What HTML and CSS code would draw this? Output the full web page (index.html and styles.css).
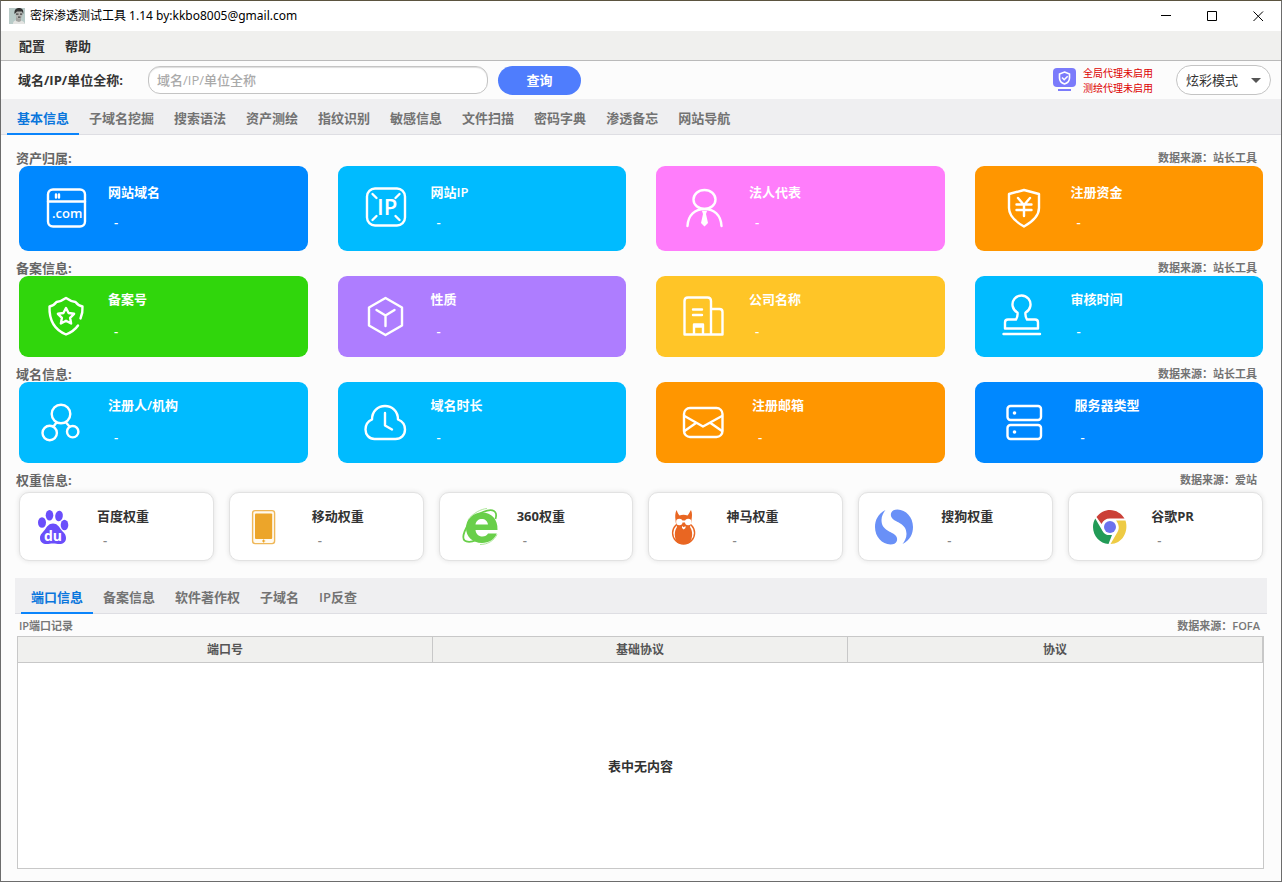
FILE: index.html
```html
<!DOCTYPE html>
<html lang="zh-CN">
<head>
<meta charset="utf-8">
<title>密探渗透测试工具</title>
<link rel="stylesheet" href="styles.css">
</head>
<body>
<div class="window">
  <header class="titlebar">
    <svg class="avatar" viewBox="0 0 16 16" aria-hidden="true">
      <rect width="16" height="16" fill="#b9cbc8"/>
      <path d="M4 16c0-3 2-4 5-4s6 1 7 4z" fill="#e4e4e2"/>
      <path d="M7 9h5v4l-2 1-3-1z" fill="#a3a3a0"/>
      <ellipse cx="10" cy="6" rx="3.6" ry="4.8" fill="#b5b5b2"/>
      <path d="M5.500 6C5 2 7 0 10 0s5 2 4.200 6L13 3.500H8z" fill="#333"/>
      <path d="M7 6.200h2.500M11 6.200h2.200M9 9.200h2.500" stroke="#444" stroke-width="1.200"/>
    </svg>
    <h1 class="titlebar-text">密探渗透测试工具 1.14 by:kkbo8005@gmail.com</h1>
    <div class="window-controls">
      <button type="button" aria-label="最小化"><svg viewBox="0 0 11 11"><path d="M0 4.500h10"/></svg></button>
      <button type="button" aria-label="最大化"><svg viewBox="0 0 11 11"><path d="M.5.5h9v9H.5z"/></svg></button>
      <button type="button" aria-label="关闭"><svg viewBox="0 0 11 11"><path d="M.5.5l9.500 9.500M10 .5L.5 10"/></svg></button>
    </div>
  </header>

  <nav class="menubar">
    <button type="button">配置</button>
    <button type="button">帮助</button>
  </nav>

  <form class="toolbar">
    <label class="search-label" for="target">域名/IP/单位全称:</label>
    <input class="search-input" id="target" type="text" placeholder="域名/IP/单位全称">
    <button class="search-button" type="button">查询</button>
    <div class="proxy">
      <svg class="proxy-icon" viewBox="0 0 24 24" aria-hidden="true">
        <rect width="23" height="19" rx="4" fill="#7b7bfb"/>
        <path d="M5 22h13" stroke="#7b7bfb" stroke-width="2"/>
        <path d="M11.500 4l5 2v4c0 3-2 5-5 6-3-1-5-3-5-6V6z" fill="none" stroke="#fff" stroke-width="1.600"/>
        <path d="M9 9.500l2.200 2.200 3.500-3.500" fill="none" stroke="#fff" stroke-width="1.600"/>
      </svg>
      <p class="proxy-status">全局代理未启用<br>测绘代理未启用</p>
    </div>
    <div class="mode">
      <select aria-label="显示模式"><option>炫彩模式</option></select>
      <svg viewBox="0 0 10 5" aria-hidden="true"><path d="M0 0h10L5 5z"/></svg>
    </div>
  </form>

  <nav class="tabs main-tabs">
    <button class="tab active" type="button">基本信息</button>
    <button class="tab" type="button">子域名挖掘</button>
    <button class="tab" type="button">搜索语法</button>
    <button class="tab" type="button">资产测绘</button>
    <button class="tab" type="button">指纹识别</button>
    <button class="tab" type="button">敏感信息</button>
    <button class="tab" type="button">文件扫描</button>
    <button class="tab" type="button">密码字典</button>
    <button class="tab" type="button">渗透备忘</button>
    <button class="tab" type="button">网站导航</button>
  </nav>

  <main class="content">
    <section class="group ownership">
      <div class="group-head"><h2>资产归属:</h2><span>数据来源：站长工具</span></div>
      <div class="cards">
        <article class="card blue lead-s">
          <div class="icon"><svg viewBox="0 0 49 49"><rect x="7" y="5.500" width="37" height="37" rx="5"/><path d="M7 17.500h37M15 10.500v3M18 10.500v3"/><text x="11" y="34" font-size="13">.com</text></svg></div>
          <div class="card-text"><h3>网站域名</h3><p>-</p></div>
        </article>
        <article class="card sky lead-m">
          <div class="icon"><svg viewBox="0 0 49 49"><rect x="7" y="4.500" width="38" height="37" rx="8"/><path d="M12.500 10l4 4M39.500 10l-4 4M12.500 36l4-4M39.500 36l-4-4"/><text x="17" y="31" font-size="22">IP</text></svg></div>
          <div class="card-text"><h3>网站IP</h3><p>-</p></div>
        </article>
        <article class="card pink lead-m">
          <div class="icon"><svg viewBox="0 0 49 49"><ellipse cx="26.500" cy="15.500" rx="11" ry="9.500"/><path d="M9.500 42C10 31 17 25 26.500 25S43 31 43.500 42"/><path class="solid" d="M24 27h5l-1 3 2 9-3.500 3.500L23 39l2-9z"/></svg></div>
          <div class="card-text"><h3>法人代表</h3><p>-</p></div>
        </article>
        <article class="card orange lead-l">
          <div class="icon"><svg viewBox="0 0 49 49"><path d="M27 6l15 4v14c0 8-7 14-15 18.500C19 38 12 32 12 24V10z"/><path d="M21 14l6 7 6-7M27 21v11M19.500 20.500h15M19.500 26h15"/></svg></div>
          <div class="card-text"><h3>注册资金</h3><p>-</p></div>
        </article>
      </div>
    </section>

    <section class="group">
      <div class="group-head"><h2>备案信息:</h2><span>数据来源：站长工具</span></div>
      <div class="cards">
        <article class="card green lead-s">
          <div class="icon"><svg viewBox="0 0 49 49"><path d="M39.500 26.500Q42 20 41.500 14.500 37 13.500 34.500 10 30 9.500 25 6 20 9.500 15.500 10 13 13.500 8.500 14.500C8 30 14 38 25 42.500 31 40 34 38 37 33.500"/><path d="M25 16l2.600 5 5.500.8-4 4 1 5.700-5.100-2.700-5.100 2.700 1-5.700-4-4 5.500-.8z"/></svg></div>
          <div class="card-text"><h3>备案号</h3><p>-</p></div>
        </article>
        <article class="card purple lead-m">
          <div class="icon"><svg viewBox="0 0 49 49"><path d="M25.500 6L42 15.500v18L25.500 43 9 33.500v-18z"/><path d="M16.500 18l9 5.500 9-5.500M25.500 23.500V34"/></svg></div>
          <div class="card-text"><h3>性质</h3><p>-</p></div>
        </article>
        <article class="card yellow lead-m">
          <div class="icon"><svg viewBox="0 0 49 49"><path d="M6.500 42.500V9q0-3.500 3.500-3.500h19.500q3.500 0 3.500 3.500v33.500M33 17h8.500q3 0 3 3v22.500h-38M16 42V32.500h9V42M18 34.500h5M15 17.500h9M15 23h9"/></svg></div>
          <div class="card-text"><h3>公司名称</h3><p>-</p></div>
        </article>
        <article class="card sky lead-l">
          <div class="icon"><svg viewBox="0 0 49 49"><path d="M11 27.500h8q2-3 1.500-7a9 9 0 1 1 8 0q-.5 4 1.500 7h8q3 0 3 3V36.500H8v-6q0-3 3-3zM6.500 42h36.500"/></svg></div>
          <div class="card-text"><h3>审核时间</h3><p>-</p></div>
        </article>
      </div>
    </section>

    <section class="group">
      <div class="group-head"><h2>域名信息:</h2><span>数据来源：站长工具</span></div>
      <div class="cards">
        <article class="card sky lead-s">
          <div class="icon"><svg viewBox="0 0 49 49"><circle cx="20" cy="16" r="9.300"/><circle cx="8.700" cy="35" r="7.200"/><circle cx="31.700" cy="33.700" r="5.700"/><path d="M15.500 24.500l-3 4M25 24.500l3.500 4"/></svg></div>
          <div class="card-text"><h3>注册人/机构</h3><p>-</p></div>
        </article>
        <article class="card sky lead-m">
          <div class="icon"><svg viewBox="0 0 49 49"><path d="M14.500 41C9 41 5.500 36.500 5.500 31.500 5.500 26 8.500 23 12 21.500 12 13 18 8 25 8s13 5 13 13.500c4 1.500 7 5 7 10C45 37 41 41 35.500 41zM25 15v12.500l7 4"/></svg></div>
          <div class="card-text"><h3>域名时长</h3><p>-</p></div>
        </article>
        <article class="card orange lead-l">
          <div class="icon"><svg viewBox="0 0 49 49"><rect x="6" y="10" width="38.500" height="29" rx="6"/><path d="M6.500 18l18.500 10.500L44 18M6.500 33L18 25M44 33l-11.500-8"/></svg></div>
          <div class="card-text"><h3>注册邮箱</h3><p>-</p></div>
        </article>
        <article class="card blue lead-xl">
          <div class="icon"><svg viewBox="0 0 49 49"><rect x="10.500" y="8" width="33.500" height="14" rx="3"/><rect x="10.500" y="27" width="33.500" height="14" rx="3"/><circle class="solid" cx="17.500" cy="15" r="1.800"/><circle class="solid" cx="17.500" cy="34" r="1.800"/></svg></div>
          <div class="card-text"><h3>服务器类型</h3><p>-</p></div>
        </article>
      </div>
    </section>

    <section class="group">
      <div class="group-head"><h2>权重信息:</h2><span>数据来源：爱站</span></div>
      <div class="weights">
        <article class="weight">
          <div class="logo"><svg viewBox="0 0 49 49"><g fill="#6a4efb"><ellipse cx="11" cy="20.500" rx="4" ry="5.300"/><ellipse cx="18.500" cy="13.300" rx="3.800" ry="5.300"/><ellipse cx="28" cy="14" rx="3.800" ry="5.300" transform="rotate(10 28 14)"/><ellipse cx="33.500" cy="23" rx="3.800" ry="5.200"/><path d="M22 21.500c4 0 6 3 8 6s5 4 5 8.500c0 4-3 6-6.500 6-2.500 0-4-.5-6.500-.5s-4 .5-6.500.5C12 42 9 40 9 36c0-4 3-5.500 5-8.500s4-6 8-6z"/></g><text class="du" x="13" y="39" font-size="14">du</text></svg></div>
          <div class="weight-text"><h3>百度权重</h3><p>-</p></div>
        </article>
        <article class="weight wide">
          <div class="logo"><svg viewBox="0 0 49 49"><rect x="11.600" y="8.600" width="22" height="33" rx="2.500" fill="#fffaf0" stroke="#efb758" stroke-width="1.400"/><rect x="14" y="11.500" width="17.200" height="25.500" rx="1" fill="#eca52a"/><path d="M22.600 37.500v3M21 39h3.200" stroke="#eca52a" stroke-width="1.200"/></svg></div>
          <div class="weight-text"><h3>移动权重</h3><p>-</p></div>
        </article>
        <article class="weight">
          <div class="logo"><svg viewBox="0 0 49 49"><path fill="#69cf4a" fill-rule="evenodd" d="M46.500 28H24.500c.5 4 3 6.500 7 6.500 2.500 0 4.500-1 5.500-3h8.800C43.500 37.500 38 41 31 41 21.500 41 15 34.500 15 26S21.500 10.500 31 10.500 47 17 46.500 28zM24.500 22.500H37c-.5-3.500-3-5.500-6.200-5.500s-5.800 2-6.300 5.500z"/><path fill="none" stroke="#69cf4a" stroke-width="1.800" d="M44.500 17C47 9 42 6 32 10c-9 3.500-17 13-19.500 23-1.500 7 5 8.500 13 5"/><path fill="none" stroke="#aee79b" d="M17 18c5-7 13-11 19-11.500M29 42.500c8 0 14-4 17-10"/></svg></div>
          <div class="weight-text"><h3>360权重</h3><p>-</p></div>
        </article>
        <article class="weight">
          <div class="logo"><svg viewBox="0 0 49 49"><ellipse cx="23.600" cy="31" rx="11" ry="11" fill="#fff" stroke="#e96622" stroke-width="1.400"/><path fill="#e96622" d="M16.500 8c1 2 1.500 4 3 5.500q4-1.500 8 0c1.500-1.500 2-3.500 3.500-5.500 1.500 3 1 7 .5 10 0 3-1 5-1.500 7 3 4 3 11-.5 16q-6 2-12 0c-3.500-5-3.500-12-.5-16-.5-2-1.500-4-1.500-7-.5-3-.5-7 1-10z"/><g fill="#fff"><circle cx="19.300" cy="20" r="3.200"/><circle cx="28.200" cy="20" r="3.200"/><path d="M21 18.500h5v2h-5zM22 24l1.700 1.200L25.500 24v2l-1.800 1.500L22 26z"/></g></svg></div>
          <div class="weight-text"><h3>神马权重</h3><p>-</p></div>
        </article>
        <article class="weight wide">
          <div class="logo"><svg viewBox="0 0 49 49" fill="#6990f7"><path id="swirl" d="M15.500 8C8 12 5 18 5 25c0 10 7 17 15.500 17.500 6.500 0 8-5 5.500-8.500-4-5-14.500-5-14.500-16 0-4 2-7.500 4-10z"/><use href="#swirl" transform="rotate(180 24 25)"/></svg></div>
          <div class="weight-text"><h3>搜狗权重</h3><p>-</p></div>
        </article>
        <article class="weight wide">
          <div class="logo"><svg viewBox="0 0 49 49"><path fill="#cb4038" d="M16.500 15C20 10.500 25 8 30 8c6 0 11.500 3.500 14.500 8.500H30c-4 0-7 2-8.500 5.500z"/><path fill="#229b57" d="M15.300 16.500l7.200 12.500c2 3.500 5 4.500 9.500 4L28.500 42C20 41.500 13 34 13 25c0-3 .8-6 2.300-8.500z"/><path fill="#eecb44" d="M45.500 18.500C49 30 42 42 30.500 42l7-12c2.500-4 1-8.500-1.500-11.500z"/><circle cx="30" cy="25" r="8" fill="#fff"/><circle cx="30" cy="25" r="6" fill="#6d72ee"/></svg></div>
          <div class="weight-text"><h3>谷歌PR</h3><p>-</p></div>
        </article>
      </div>
    </section>
  </main>

  <section class="details">
    <nav class="tabs sub-tabs">
      <button class="tab active" type="button">端口信息</button>
      <button class="tab" type="button">备案信息</button>
      <button class="tab" type="button">软件著作权</button>
      <button class="tab" type="button">子域名</button>
      <button class="tab" type="button">IP反查</button>
    </nav>
    <div class="record-head"><span>IP端口记录</span><span>数据来源：FOFA</span></div>
    <div class="table-wrap">
      <table>
        <thead><tr><th scope="col">端口号</th><th scope="col">基础协议</th><th scope="col">协议</th></tr></thead>
        <tbody><tr><td colspan="3">表中无内容</td></tr></tbody>
      </table>
    </div>
  </section>
</div>
</body>
</html>
```
FILE: styles.css
```css
* {
  box-sizing: border-box;
}

body {
  margin: 0;
  font-family: "Open Sans", "Noto Sans CJK SC", sans-serif;
  font-size: 13px;
  font-weight: 600;
  line-height: 16px;
  color: #333;
}

h1, h2, h3, p {
  margin: 0;
  font-size: inherit;
  font-weight: inherit;
}

button, input, select {
  padding: 0;
  border: 0;
  background: none;
  font: inherit;
  color: inherit;
}

.window {
  display: flex;
  flex-direction: column;
  height: 100vh;
  min-height: 760px;
  border: 1px solid #6c6c6c;
  border-top-color: #5b543f;
  background: #fcfcfc;
}

/* Title bar */
.titlebar {
  display: flex;
  align-items: center;
  height: 30px;
  padding-left: 8px;
  background: #fff;
}

.avatar {
  width: 16px;
  height: 16px;
}

.titlebar-text {
  flex: 1;
  margin-left: 5px;
  font-family: "Noto Sans", "Noto Sans CJK SC", sans-serif;
  font-size: 12px;
  font-weight: 400;
  color: #000;
}

.window-controls {
  display: flex;
}

.window-controls button {
  display: grid;
  place-items: center;
  width: 46px;
  height: 30px;
}

.window-controls svg {
  width: 11px;
  height: 11px;
  fill: none;
  stroke: #000;
}

/* Menu bar */
.menubar {
  display: flex;
  gap: 20px;
  height: 30px;
  padding-left: 18px;
  border-bottom: 1px solid #bababa;
  background: #f0f0ee;
}

/* Toolbar */
.toolbar {
  display: flex;
  align-items: center;
  height: 38px;
  padding: 0 10px 0 17px;
}

.search-label {
  width: 130px;
  font-weight: 700;
}

.search-input {
  width: 340px;
  height: 28px;
  padding: 0 8px;
  border: 1px solid #c4c4c4;
  border-radius: 12px;
  background: #fff;
  box-shadow: inset 0 1px 1px #ddd;
  font-weight: 500;
}

.search-input::placeholder {
  color: #aaa;
}

.search-button {
  width: 83px;
  height: 29px;
  margin-left: 10px;
  border-radius: 15px;
  background: #4f7dfd;
  color: #fff;
}

.proxy {
  display: flex;
  align-items: center;
  gap: 6px;
  margin-left: auto;
}

.proxy-icon {
  width: 24px;
  height: 24px;
}

.proxy-status {
  padding-top: 2px;
  font-size: 10px;
  font-weight: 400;
  line-height: 15px;
  color: #d00;
}

.mode {
  position: relative;
  width: 95px;
  margin-left: 23px;
}

.mode select {
  display: block;
  width: 100%;
  height: 30px;
  padding: 0 9px;
  border: 1px solid #c4c4c4;
  border-radius: 15px;
  background: #fff;
  font-weight: 400;
  appearance: none;
}

.mode svg {
  position: absolute;
  top: 13px;
  right: 10px;
  width: 10px;
  height: 5px;
  fill: #555;
  pointer-events: none;
}

/* Tabs */
.tabs {
  display: flex;
  height: 36px;
  padding-left: 6px;
  border-bottom: 1px solid #dedee3;
  background: #efeff1;
}

.tab {
  height: 36px;
  padding: 4px 10px 0;
  border-bottom: 2px solid transparent;
  color: #737373;
}

.tab.active {
  border-bottom-color: #0a84fb;
  color: #0a76dc;
}

/* Card groups */
.content {
  padding: 6px 18px 0;
}

.group-head {
  display: flex;
  justify-content: space-between;
  margin-left: -3px;
  padding: 9px 6px 0 0;
  color: #666;
}

.group-head h2 {
  font-weight: 700;
}

.group-head span {
  font-size: 11px;
  font-weight: 700;
  color: #737373;
}

.cards {
  display: grid;
  grid-template-columns: repeat(4, 1fr);
  gap: 30px;
}

.card {
  display: grid;
  align-items: center;
  height: 81px;
  border-radius: 9px;
  color: #fff;
}

.ownership .card {
  height: 85px;
}

.lead-s { grid-template-columns: 89px 1fr; }
.lead-m { grid-template-columns: 93px 1fr; }
.lead-l { grid-template-columns: 96px 1fr; }
.lead-xl { grid-template-columns: 100px 1fr; }

.blue { background: #0088ff; }
.sky { background: #00bbff; }
.pink { background: #ff7dfb; }
.orange { background: #ff9600; }
.green { background: #30d60c; }
.purple { background: #ae7dff; }
.yellow { background: #ffc527; }

.icon {
  padding-left: 22px;
}

.icon svg,
.logo svg {
  display: block;
  width: 49px;
  height: 49px;
}

.icon svg {
  fill: none;
  stroke: #fff;
  stroke-width: 2.4;
  stroke-linecap: round;
  stroke-linejoin: round;
}

.icon text {
  fill: #fff;
  stroke: none;
  font-weight: 600;
}

.icon .solid {
  fill: #fff;
  stroke: none;
}

.card-text {
  display: grid;
  gap: 16px;
  padding-bottom: 4px;
}

.ownership .card-text {
  gap: 14px;
}

.card-text p {
  padding-left: 6px;
}

.weights {
  display: grid;
  grid-template-columns: repeat(6, 1fr);
  gap: 15px;
  margin-top: 4px;
}

.weight {
  display: grid;
  grid-template-columns: 77px 1fr;
  align-items: center;
  height: 69px;
  border: 1px solid #e2e2e2;
  border-radius: 10px;
  background: #fff;
  box-shadow: 0 0 5px #e2e2e2;
}

.weight.wide {
  grid-template-columns: 82px 1fr;
}

.logo {
  padding-left: 11px;
}

.du {
  fill: #fff;
  font-weight: 700;
}

.weight-text {
  display: grid;
  gap: 8px;
  padding-top: 3px;
}

.weight-text h3 {
  font-weight: 700;
}

.weight-text p {
  padding-left: 6px;
  color: #888;
}

/* Details */
.details {
  display: flex;
  flex: 1;
  flex-direction: column;
  min-height: 0;
  padding: 17px 14px 12px;
}

.record-head {
  display: flex;
  justify-content: space-between;
  padding: 4px 7px 2px 4px;
  font-size: 11px;
  color: #777;
}

.table-wrap {
  flex: 1;
  min-height: 0;
  margin: 0 3px 0 2px;
  border: 1px solid #c8c8c8;
  background: #fff;
}

table {
  width: 100%;
  height: 100%;
  border-spacing: 0;
  table-layout: fixed;
}

th {
  height: 26px;
  padding: 1px 0 0;
  border-right: 1px solid #c8c8c8;
  border-bottom: 1px solid #c8c8c8;
  background: #f0f0ee;
  font-size: 12px;
  font-weight: 600;
  color: #555;
}

td {
  padding: 0;
  text-align: center;
}
```
